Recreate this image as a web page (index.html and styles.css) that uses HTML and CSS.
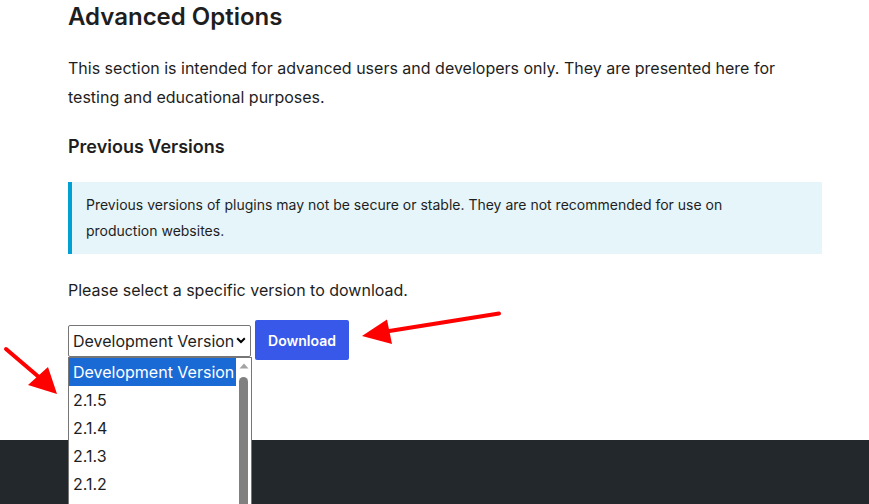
FILE: index.html
```html
<!DOCTYPE html>
<html lang="en">
<head>
<meta charset="utf-8">
<title>Advanced Options</title>
<link rel="stylesheet" href="styles.css">
</head>
<body>
<main class="content">
  <h2 class="title">Advanced Options</h2>
  <p class="text">This section is intended for advanced users and developers only. They are presented here for testing and educational purposes.</p>
  <h3 class="subtitle">Previous Versions</h3>
  <div class="notice"><p class="notice-text">Previous versions of plugins may not be secure or stable. They are not recommended for use on production websites.</p></div>
  <p class="text">Please select a specific version to download.</p>
  <div class="form-row">
    <div class="select-wrap">
      <div class="select">
        <span class="select-value">Development Version</span>
        <svg class="chevron" width="10" height="7" viewBox="0 0 10 7"><path d="M1.2 1.3 L5 5 L8.8 1.3" fill="none" stroke="#000" stroke-width="2"/></svg>
      </div>
      <div class="listbox">
        <div class="options">
          <div class="option selected">Development Version</div>
          <div class="option">2.1.5</div>
          <div class="option">2.1.4</div>
          <div class="option">2.1.3</div>
          <div class="option">2.1.2</div>
        </div>
        <div class="scrollbar">
          <svg class="scroll-up" width="10" height="6" viewBox="0 0 10 6"><path d="M0.5 5.5 L5 0.5 L9.5 5.5 Z" fill="#a3a3a3"/></svg>
          <div class="thumb"></div>
        </div>
      </div>
    </div>
    <button class="button" type="button">Download</button>
  </div>
</main>
<footer class="footer"></footer>
<svg class="arrows" width="869" height="504" viewBox="0 0 869 504">
  <line x1="499" y1="313.5" x2="383" y2="332" stroke="#f00" stroke-width="4" stroke-linecap="round"/>
  <polygon points="362,336 387,319.5 392,344" fill="#f00"/>
  <line x1="6" y1="349" x2="40" y2="378" stroke="#f00" stroke-width="4" stroke-linecap="round"/>
  <polygon points="57,394 28,385 48,367" fill="#f00"/>
</svg>
</body>
</html>
```

FILE: styles.css
```css
html, body {
  margin: 0;
  padding: 0;
  background: #fff;
}
body {
  font-family: Inter, "Noto Sans", sans-serif;
  color: #1e1e1e;
  position: relative;
  width: 869px;
  height: 504px;
  overflow: hidden;
}
.content {
  margin-left: 68px;
  width: 754px;
  height: 440px;
  display: flex;
  flex-direction: column;
  align-items: flex-start;
}
.title {
  font-size: 24px;
  font-weight: 600;
  line-height: 31px;
  margin: 1px 0 0;
}
.text {
  font-size: 16px;
  line-height: 28.8px;
  margin: 22px 0 0;
}
.subtitle {
  font-size: 18px;
  font-weight: 600;
  line-height: 22px;
  margin: 24px 0 0;
}
.notice {
  align-self: stretch;
  margin-top: 24px;
  background: #e5f5fa;
  border-left: 4px solid #00a0d2;
  padding: 10px 30px 10px 14px;
}
.notice-text {
  margin: 0;
  font-size: 14px;
  line-height: 26px;
}
.notice + .text {
  margin-top: 22px;
}
.form-row {
  margin-top: 16px;
  display: flex;
  align-items: center;
  gap: 4px;
}
.select-wrap {
  position: relative;
}
.select {
  box-sizing: border-box;
  width: 183px;
  height: 32px;
  border: 1px solid #767676;
  border-radius: 2px;
  display: flex;
  align-items: center;
  justify-content: space-between;
  padding: 0 4px 0 4px;
  font-size: 16px;
  margin-top: 1px;
}
.select-value {
  white-space: nowrap;
}
.chevron {
  display: block;
}
.listbox {
  position: absolute;
  left: 0;
  top: 33px;
  width: 184px;
  box-sizing: border-box;
  border: 1px solid #767676;
  background: #fff;
  display: flex;
  height: 160px;
  overflow: hidden;
  z-index: 2;
}
.options {
  flex: 1;
}
.option {
  height: 28px;
  line-height: 28px;
  padding-left: 4px;
  font-size: 16px;
  white-space: nowrap;
  color: #1e1e1e;
}
.option.selected {
  background: #1a6ad6;
  color: #fff;
}
.scrollbar {
  width: 15px;
  display: flex;
  flex-direction: column;
  align-items: center;
}
.scroll-up {
  margin-top: 5px;
  display: block;
}
.thumb {
  margin-top: 8px;
  width: 9px;
  flex: 1;
  background: #808080;
  border-radius: 5px 5px 0 0;
}
.button {
  width: 94px;
  height: 40px;
  background: #3858e9;
  color: #fff;
  border: none;
  border-radius: 2px;
  font-family: Inter, "Noto Sans", sans-serif;
  font-size: 14px;
  font-weight: 600;
  padding: 0;
}
.footer {
  height: 64px;
  background: #23282d;
}
.arrows {
  position: absolute;
  left: 0;
  top: 0;
  z-index: 5;
  pointer-events: none;
}
```
